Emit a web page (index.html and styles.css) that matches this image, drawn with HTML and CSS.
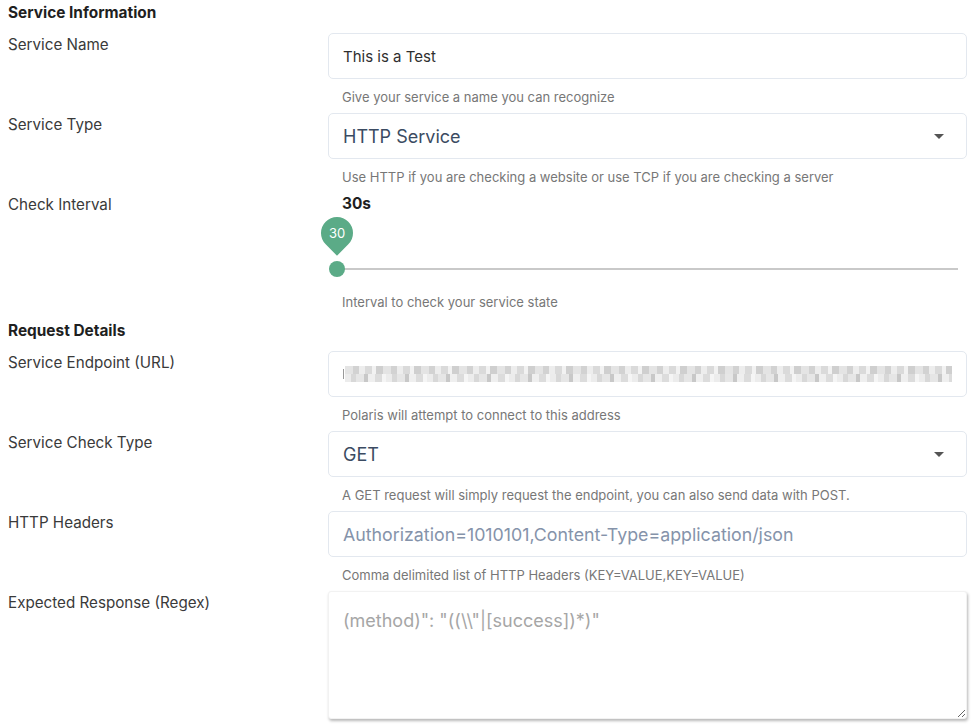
FILE: index.html
```html
<!DOCTYPE html>
<html>
<head>
<meta charset="utf-8">
<link rel="stylesheet" href="styles.css">
</head>
<body>
<form class="form">
  <h2 class="section-title">Service Information</h2>

  <div class="row">
    <label class="label">Service Name</label>
    <div class="field">
      <div class="input input-text">This is a Test</div>
      <p class="help">Give your service a name you can recognize</p>
    </div>
  </div>

  <div class="row">
    <label class="label">Service Type</label>
    <div class="field">
      <div class="input select"><span>HTTP Service</span><span class="caret"></span></div>
      <p class="help">Use HTTP if you are checking a website or use TCP if you are checking a server</p>
    </div>
  </div>

  <div class="row">
    <label class="label">Check Interval</label>
    <div class="field">
      <div class="interval-value">30s</div>
      <div class="slider">
        <div class="bubble"><span>30</span></div>
        <div class="track"></div>
        <div class="thumb"></div>
      </div>
      <p class="help help-slider">Interval to check your service state</p>
    </div>
  </div>

  <h2 class="section-title section-title-2">Request Details</h2>

  <div class="row">
    <label class="label">Service Endpoint (URL)</label>
    <div class="field">
      <div class="input blurred"><span class="cursor"></span><div class="pix"></div></div>
      <p class="help">Polaris will attempt to connect to this address</p>
    </div>
  </div>

  <div class="row">
    <label class="label">Service Check Type</label>
    <div class="field">
      <div class="input select"><span>GET</span><span class="caret"></span></div>
      <p class="help">A GET request will simply request the endpoint, you can also send data with POST.</p>
    </div>
  </div>

  <div class="row">
    <label class="label">HTTP Headers</label>
    <div class="field">
      <div class="input placeholder">Authorization=1010101,Content-Type=application/json</div>
      <p class="help">Comma delimited list of HTTP Headers (KEY=VALUE,KEY=VALUE)</p>
    </div>
  </div>

  <div class="row">
    <label class="label">Expected Response (Regex)</label>
    <div class="field">
      <textarea class="textarea" placeholder="(method)&quot;: &quot;((\\&quot;|[success])*)&quot;"></textarea>
    </div>
  </div>
</form>
</body>
</html>
```

FILE: styles.css
```css
* { box-sizing: border-box; }
html, body { margin: 0; padding: 0; background: #fff; }
body {
  font-family: Inter, "Noto Sans", sans-serif;
  color: #333;
  width: 975px;
  height: 728px;
  overflow: hidden;
}
.form { padding: 0 8px 0 8px; }
.section-title {
  margin: 3px 0 10px;
  font-size: 15.4px;
  line-height: 20px;
  font-weight: 700;
  color: #1f1f1f;
}
.section-title-2 { margin: 3px 0 10px; }
.row {
  display: grid;
  grid-template-columns: 320px 1fr;
}
.label {
  font-size: 15.2px;
  line-height: 20px;
  padding-top: 2px;
  color: #3a3a3a;
}
.field { display: flex; flex-direction: column; }
.input {
  height: 46px;
  border: 1px solid #e3e8ef;
  border-radius: 5px;
  padding: 0 14px;
  display: flex;
  align-items: center;
  font-size: 18px;
  color: #3b4b62;
}
.input-text { font-size: 15px; color: #2f2f2f; }
.select { justify-content: space-between; }
.caret {
  width: 0; height: 0;
  border-left: 5px solid transparent;
  border-right: 5px solid transparent;
  border-top: 5px solid #555;
  margin-right: 8px;
}
.placeholder { color: #8593aa; font-size: 17.8px; }
.help {
  margin: 9px 0 7px 14px;
  font-size: 13px;
  line-height: 18px;
  color: #777;
}
.interval-value {
  font-size: 15.4px;
  font-weight: 700;
  line-height: 20px;
  margin: 1px 0 0 14px;
  color: #1f1f1f;
}
.slider {
  position: relative;
  height: 72px;
  margin-top: 2px;
  margin-left: 1px;
  margin-right: 9px;
}
.track {
  position: absolute;
  left: 8px; right: 0;
  top: 52px;
  height: 2px;
  background: #c9c9c9;
}
.thumb {
  position: absolute;
  left: 0; top: 45px;
  width: 16px; height: 16px;
  border-radius: 50%;
  background: #5bab87;
}
.bubble {
  position: absolute;
  left: -8px; top: 1px;
  width: 32px; height: 32px;
  display: flex; align-items: center; justify-content: center;
}
.bubble::before {
  content: "";
  position: absolute;
  inset: 0;
  background: #5bab87;
  border-radius: 50% 50% 0 50%;
  transform: rotate(45deg);
}
.bubble span {
  position: relative;
  color: #fff;
  font-size: 13px;
}
.help-slider { margin-top: 5px; }
.blurred { padding: 0 14px; gap: 1px; }
.cursor { width: 1px; height: 10px; background: #999; flex: none; }
.pix {
  flex: 1;
  height: 16px;
  background:
    repeating-linear-gradient(90deg, #e4e4e4 0 8px, #d2d2d2 8px 14px, #ededed 14px 20px, #dadada 20px 27px, #f2f2f2 27px 31px, #cfcfcf 31px 38px) top / 100% 8px no-repeat,
    repeating-linear-gradient(90deg, #ececec 0 6px, #d8d8d8 6px 11px, #e6e6e6 11px 19px, #c8c8c8 19px 23px, #efefef 23px 30px, #dcdcdc 30px 37px, #f5f5f5 37px 41px) bottom / 100% 8px no-repeat;
}
.textarea {
  display: block;
  width: 100%;
  height: 128px;
  border: 1px solid #f2f2f2;
  border-radius: 3px;
  box-shadow: 1px 2px 3px rgba(0,0,0,0.28);
  padding: 18px 14px;
  font-family: Inter, "Noto Sans", sans-serif;
  font-size: 18px;
  resize: both;
  outline: none;
}
.textarea::placeholder { color: #a6a6a6; }
```
